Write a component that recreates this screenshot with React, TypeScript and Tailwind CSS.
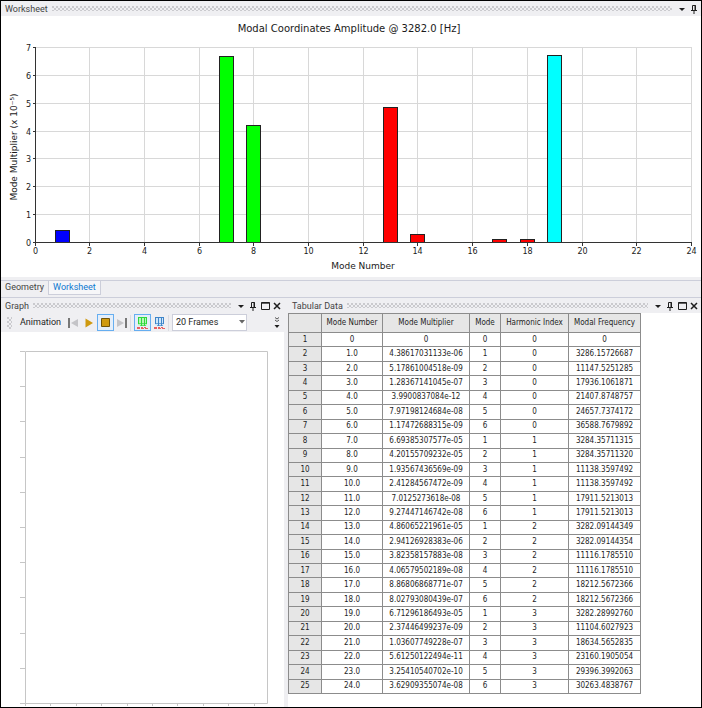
import type { ReactElement, ReactNode } from "react";

const X0 = 34;
const X_UNIT = 27.35;
const Y0 = 226;
const Y_UNIT = 27.86;

const BARS = [
  { mode: 1, value: 0.44, fill: "#0000ff" },
  { mode: 7, value: 6.69, fill: "#00ff00" },
  { mode: 8, value: 4.2, fill: "#00ff00" },
  { mode: 13, value: 4.86, fill: "#ff0000" },
  { mode: 14, value: 0.29, fill: "#ff0000" },
  { mode: 17, value: 0.09, fill: "#ff0000" },
  { mode: 18, value: 0.09, fill: "#ff0000" },
  { mode: 19, value: 6.71, fill: "#00ffff" },
];

const COLUMNS = ["Mode Number", "Mode Multiplier", "Mode", "Harmonic Index", "Modal Frequency"];

const ROWS = [
  ["0", "0", "0", "0", "0"],
  ["1.0", "4.38617031133e-06", "1", "0", "3286.15726687"],
  ["2.0", "5.17861004518e-09", "2", "0", "11147.5251285"],
  ["3.0", "1.28367141045e-07", "3", "0", "17936.1061871"],
  ["4.0", "3.9900837084e-12", "4", "0", "21407.8748757"],
  ["5.0", "7.97198124684e-08", "5", "0", "24657.7374172"],
  ["6.0", "1.17472688315e-09", "6", "0", "36588.7679892"],
  ["7.0", "6.69385307577e-05", "1", "1", "3284.35711315"],
  ["8.0", "4.20155709232e-05", "2", "1", "3284.35711320"],
  ["9.0", "1.93567436569e-09", "3", "1", "11138.3597492"],
  ["10.0", "2.41284567472e-09", "4", "1", "11138.3597492"],
  ["11.0", "7.0125273618e-08", "5", "1", "17911.5213013"],
  ["12.0", "9.27447146742e-08", "6", "1", "17911.5213013"],
  ["13.0", "4.86065221961e-05", "1", "2", "3282.09144349"],
  ["14.0", "2.94126928383e-06", "2", "2", "3282.09144354"],
  ["15.0", "3.82358157883e-08", "3", "2", "11116.1785510"],
  ["16.0", "4.06579502189e-08", "4", "2", "11116.1785510"],
  ["17.0", "8.86806868771e-07", "5", "2", "18212.5672366"],
  ["18.0", "8.02793080439e-07", "6", "2", "18212.5672366"],
  ["19.0", "6.71296186493e-05", "1", "3", "3282.28992760"],
  ["20.0", "2.37446499237e-09", "2", "3", "11104.6027923"],
  ["21.0", "1.03607749228e-07", "3", "3", "18634.5652835"],
  ["22.0", "5.61250122494e-11", "4", "3", "23160.1905054"],
  ["23.0", "3.25410540702e-10", "5", "3", "29396.3992063"],
  ["24.0", "3.62909355074e-08", "6", "3", "30263.4838767"],
];

function IconButton({ label, children }: { label: string; children: ReactNode }): ReactElement {
  return (
    <button type="button" aria-label={label} className="flex h-3 w-3 items-center justify-center">
      {children}
    </button>
  );
}

function PaneHeader({ title, closable = true }: { title: string; closable?: boolean }): ReactElement {
  return (
    <header className="flex h-[15px] shrink-0 items-center bg-[#efeff2] pl-1 pr-px">
      <h2 className="text-[9px] leading-3 text-[#444]">{title}</h2>
      <div className="mx-1 h-[5px] flex-1 bg-[radial-gradient(circle_at_1px_1px,#cacace_0.8px,transparent_1px),radial-gradient(circle_at_3px_3px,#cacace_0.8px,transparent_1px)] bg-[length:4px_4px]" />
      <div className="flex">
        <IconButton label={`${title} menu`}>
          <svg width="8" height="8" viewBox="0 0 8 8">
            <path d="M1 3h6L4 6z" fill="#1e1e1e" />
          </svg>
        </IconButton>
        <IconButton label={`Pin ${title}`}>
          <svg width="8" height="10" viewBox="0 0 8 10" fill="none" stroke="#1e1e1e">
            <path d="M2.5 6V1.5h3V6M5 1v5M1 6.5h6M4 7v3" />
          </svg>
        </IconButton>
        {closable && (
          <>
            <IconButton label={`Maximize ${title}`}>
              <svg width="9" height="8" viewBox="0 0 9 8" fill="none" stroke="#1e1e1e">
                <path d="M0.5 0.5h8v7h-8zM0 1.2h9" />
              </svg>
            </IconButton>
            <IconButton label={`Close ${title}`}>
              <svg width="8" height="8" viewBox="0 0 8 8" stroke="#1e1e1e" strokeWidth="1.5">
                <path d="M1 1l6 6M7 1L1 7" />
              </svg>
            </IconButton>
          </>
        )}
      </div>
    </header>
  );
}

function AmplitudeChart(): ReactElement {
  const xTicks = Array.from({ length: 13 }, (_, i) => i * 2);
  const yTicks = Array.from({ length: 8 }, (_, i) => i);

  return (
    <svg
      viewBox="0 0 700 261"
      role="img"
      aria-label="Modal coordinates amplitude"
      className="block w-full bg-white font-['DejaVu_Sans'] text-[8px]"
      fill="#1a1a1a"
    >
      <text x="348" y="16" textAnchor="middle" className="text-[10px]">
        Modal Coordinates Amplitude @ 3282.0 [Hz]
      </text>
      {xTicks.map((t) => {
        const x = Math.floor(X0 + t * X_UNIT) + 0.5;
        return (
          <g key={t}>
            {t > 0 && <path d={`M${x} 31V226`} stroke="#d8d8d8" />}
            <path d={`M${x} 226v4`} stroke="#333" />
            <text x={x} y="238" textAnchor="middle">
              {t}
            </text>
          </g>
        );
      })}
      {yTicks.map((t) => {
        const y = Math.round(Y0 - t * Y_UNIT) + 0.5;
        return (
          <g key={t}>
            {t > 0 && <path d={`M34 ${y}H691`} stroke="#d8d8d8" />}
            <path d={`M32 ${y}h3`} stroke="#333" />
            <text x="30" y={y + 3} textAnchor="end">
              {t}
            </text>
          </g>
        );
      })}
      {BARS.map((b) => {
        const x = Math.floor(X0 + b.mode * X_UNIT - 7) + 0.5;
        const y = Math.round(Y0 - b.value * Y_UNIT) + 0.5;
        return (
          <rect key={b.mode} x={x} y={y} width="14" height={226.5 - y} fill={b.fill} stroke="#222" />
        );
      })}
      <path d="M34.5 31V226.5H691" stroke="#333" fill="none" />
      <text x="362" y="253" textAnchor="middle" className="text-[9px]">
        Mode Number
      </text>
      <text transform="translate(16 131) rotate(-90)" textAnchor="middle" className="text-[9px]">
        Mode Multiplier (x 10⁻⁵)
      </text>
    </svg>
  );
}

function FramesIcon({ fill, stroke }: { fill: string; stroke: string }): ReactElement {
  return (
    <svg width="11" height="12" viewBox="0 0 11 12" fill="none">
      <path d="M1 0.5h9v8H1z" fill={fill} />
      <path d="M1.5 0v7M4.5 0v9M7.5 0v9M9.5 0v7M1 0.5h9" stroke={stroke} />
      <path d="M1 6.5h9M3 8.5h6" stroke={stroke} strokeWidth="0.7" />
      <path d="M0 10.5h6M7 10.5h2M0 11.5h11" stroke="#e86060" strokeDasharray="3 1" />
    </svg>
  );
}

function AnimationToolbar(): ReactElement {
  return (
    <div className="flex h-[19px] shrink-0 items-center bg-[#efeff2] pl-1.5 pr-0.5 text-[9px] text-[#1e1e1e]">
      <span className="h-3 w-[5px] bg-[radial-gradient(circle_at_1px_1px,#cacace_0.8px,transparent_1px),radial-gradient(circle_at_3px_3px,#cacace_0.8px,transparent_1px)] bg-[length:4px_4px]" />
      <span className="ml-2 w-[47px]">Animation</span>
      <button type="button" aria-label="First frame" className="flex w-3 justify-center">
        <svg width="10" height="10" viewBox="0 0 10 10">
          <path d="M0 0h2v10H0z" fill="#777" />
          <path d="M10 1v8L3 5z" fill="#c4c4c8" />
        </svg>
      </button>
      <button type="button" aria-label="Play" className="ml-1 flex w-3 justify-center">
        <svg width="8" height="10" viewBox="0 0 8 10">
          <path d="M0.5 0.5v9L8 5z" fill="#cf9a10" />
        </svg>
      </button>
      <button
        type="button"
        aria-label="Stop"
        className="ml-0.5 flex h-[17px] w-[17px] items-center justify-center border border-[#66aef0] bg-[#e4eefa]"
      >
        <svg width="9" height="9" viewBox="0 0 9 9">
          <path d="M0.5 0.5h8v8h-8z" fill="#cf9a10" stroke="#70540c" />
        </svg>
      </button>
      <button type="button" aria-label="Last frame" className="ml-0.5 flex w-3 justify-center">
        <svg width="10" height="10" viewBox="0 0 10 10">
          <path d="M8 0h2v10H8z" fill="#777" />
          <path d="M0 1v8l7-4z" fill="#c4c4c8" />
        </svg>
      </button>
      <span className="ml-0.5 h-4 w-px bg-[#dcdce2]" />
      <button
        type="button"
        aria-label="Distributed frames"
        className="ml-[3px] flex h-[17px] w-[17px] items-center justify-center border border-[#66aef0] bg-[#e4eefa]"
      >
        <FramesIcon fill="#b8f5b8" stroke="#2fd83c" />
      </button>
      <button type="button" aria-label="Result sets" className="flex h-[17px] w-[17px] items-center justify-center">
        <FramesIcon fill="#cfe6fa" stroke="#3f85c8" />
      </button>
      <span className="h-4 w-px bg-[#dcdce2]" />
      <div className="relative ml-[3px] flex">
        <select
          aria-label="Frame count"
          className="h-[17px] w-[75px] appearance-none border border-[#ccceda] bg-white py-0 pl-[3px] pr-2 text-[9px] leading-[15px]"
        >
          <option>20 Frames</option>
        </select>
        <svg width="6" height="4" viewBox="0 0 6 4" className="pointer-events-none absolute right-0.5 top-1.5">
          <path d="M0 0h6L3 3.5z" fill="#666" />
        </svg>
      </div>
      <button type="button" aria-label="Toolbar options" className="ml-auto mr-0.5">
        <svg width="6" height="12" viewBox="0 0 6 12" fill="none">
          <path d="M1 0.5l2 1.5 2-1.5M1 3l2 1.5L5 3" stroke="#555" />
          <path d="M0.5 8h5L3 11z" fill="#1e1e1e" />
        </svg>
      </button>
    </div>
  );
}

function EmptyGraph(): ReactElement {
  const yTicks = Array.from({ length: 11 }, (_, i) => Math.round(19 + i * 35.2) + 0.5);
  const xTicks = Array.from({ length: 10 }, (_, i) => Math.round(24 + i * 25.4) + 0.5);

  return (
    <svg viewBox="0 0 283 374" className="block w-full" fill="none" stroke="#c6c6c6">
      <path d="M24.5 19.5h242v352h-242z" />
      {yTicks.map((y) => (
        <path key={y} d={`M19 ${y}h5`} />
      ))}
      {xTicks.map((x) => (
        <path key={x} d={`M${x} 371v4`} />
      ))}
    </svg>
  );
}

function TabularData(): ReactElement {
  return (
    <table className="h-[381px] w-[353px] table-fixed border-collapse text-center font-['DejaVu_Sans_Condensed','DejaVu_Sans'] text-[8px] leading-3 text-[#1e1e1e] [&_td]:border [&_td]:border-[#8c8c8c] [&_td]:p-0 [&_th]:border [&_th]:border-[#8c8c8c] [&_th]:bg-[#e6e6e6] [&_th]:p-0 [&_th]:font-normal">
      <colgroup>
        <col className="w-[33px]" />
        <col className="w-[61px]" />
        <col className="w-[87px]" />
        <col className="w-[31px]" />
        <col className="w-[68px]" />
        <col className="w-[72px]" />
      </colgroup>
      <thead>
        <tr className="h-[19px]">
          <th aria-label="Row" />
          {COLUMNS.map((c) => (
            <th key={c} scope="col">
              {c}
            </th>
          ))}
        </tr>
      </thead>
      <tbody>
        {ROWS.map((row, i) => (
          <tr key={i}>
            <th scope="row">{i + 1}</th>
            {row.map((cell, j) => (
              <td key={j}>{cell}</td>
            ))}
          </tr>
        ))}
      </tbody>
    </table>
  );
}

export default function App(): ReactElement {
  return (
    <main className="flex min-h-screen flex-col border border-black bg-[#efeff2] font-['Roboto',sans-serif]">
      {/* Worksheet */}
      <section>
        <PaneHeader title="Worksheet" closable={false} />
        <AmplitudeChart />
      </section>

      {/* View tabs */}
      <nav className="mt-[3px] flex h-[18px] items-start border-y border-[#ccceda] text-[9px] leading-3" aria-label="Views">
        <a href="#geometry" className="px-1 text-[#444]">
          Geometry
        </a>
        <a href="#worksheet" className="h-[14px] border border-t-0 border-[#ccceda] bg-[#f6f6f8] px-1 text-[#0e78d0]">
          Worksheet
        </a>
      </nav>

      {/* Bottom panes */}
      <div className="grid flex-1 grid-cols-[287fr_413fr]">
        <section className="flex min-w-0 flex-col border-r-4 border-[#efeff2] bg-white">
          <PaneHeader title="Graph" />
          <AnimationToolbar />
          <EmptyGraph />
        </section>
        <section className="min-w-0 bg-white">
          <PaneHeader title="Tabular Data" />
          <TabularData />
        </section>
      </div>
    </main>
  );
}
